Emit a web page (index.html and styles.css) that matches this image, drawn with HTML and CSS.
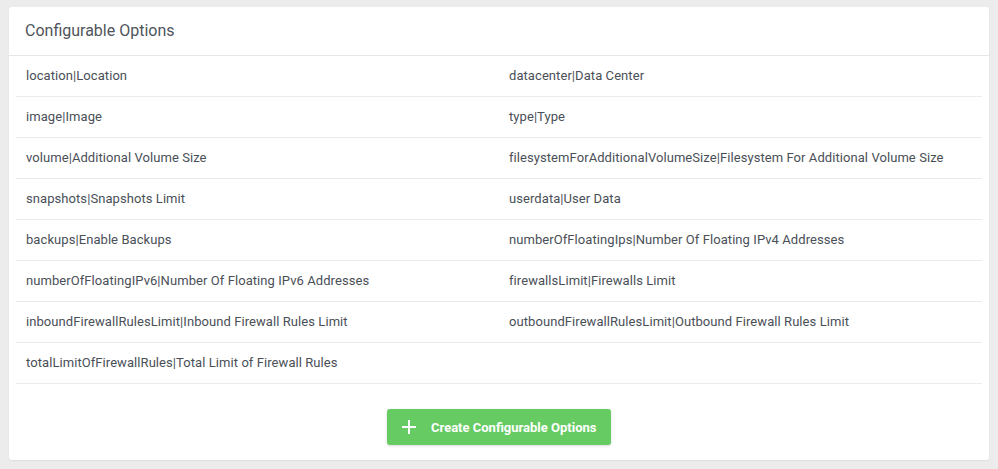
FILE: index.html
```html
<!DOCTYPE html>
<html lang="en">
<head>
    <meta charset="UTF-8">
    <title>Configurable Options</title>
    <link rel="stylesheet" href="styles.css">
</head>
<body>
    <div class="panel">
        <div class="panel-heading">
            <h3>Configurable Options</h3>
        </div>
        <div class="panel-body">
            <table class="options-table">
                <tr><td>location|Location</td><td>datacenter|Data Center</td></tr>
                <tr><td>image|Image</td><td>type|Type</td></tr>
                <tr><td>volume|Additional Volume Size</td><td>filesystemForAdditionalVolumeSize|Filesystem For Additional Volume Size</td></tr>
                <tr><td>snapshots|Snapshots Limit</td><td>userdata|User Data</td></tr>
                <tr><td>backups|Enable Backups</td><td>numberOfFloatingIps|Number Of Floating IPv4 Addresses</td></tr>
                <tr><td>numberOfFloatingIPv6|Number Of Floating IPv6 Addresses</td><td>firewallsLimit|Firewalls Limit</td></tr>
                <tr><td>inboundFirewallRulesLimit|Inbound Firewall Rules Limit</td><td>outboundFirewallRulesLimit|Outbound Firewall Rules Limit</td></tr>
                <tr><td>totalLimitOfFirewallRules|Total Limit of Firewall Rules</td><td></td></tr>
            </table>
            <div class="actions">
                <button class="btn-create">
                    <svg width="14" height="14" viewBox="0 0 14 14"><path d="M7 0v14M0 7h14" stroke="#fff" stroke-width="2"/></svg>
                    <span>Create Configurable Options</span>
                </button>
            </div>
        </div>
    </div>
</body>
</html>
```

FILE: styles.css
```css
body {
    margin: 0;
    padding: 7px 9px 9px 9px;
    background-color: #ececec;
    font-family: Roboto, 'Liberation Sans', sans-serif;
    color: #4c5158;
}
.panel {
    width: 980px;
    background-color: #fff;
    border-radius: 3px;
    box-shadow: 0 1px 2px rgba(0, 0, 0, 0.06);
}
.panel-heading {
    height: 48px;
    padding: 0 16px;
    border-bottom: 1px solid #e6e6e9;
    display: flex;
    align-items: center;
}
.panel-heading h3 {
    margin: 0 0 2px 0;
    font-size: 16px;
    font-weight: 400;
    color: #4f545b;
}
.panel-body {
    padding: 0 7px 15px 7px;
}
.options-table {
    width: 966px;
    border-collapse: collapse;
    table-layout: fixed;
}
.options-table td {
    height: 38px;
    padding: 0 10px 2px 10px;
    border-bottom: 1px solid #ebebef;
    font-size: 13px;
    letter-spacing: 0.07px;
    color: #4a4f57;
    vertical-align: middle;
}
.actions {
    display: flex;
    justify-content: center;
    padding-top: 25px;
}
.btn-create {
    width: 224px;
    height: 36px;
    border: none;
    border-radius: 3px;
    background-color: #66cb63;
    color: #fff;
    font-family: Roboto, 'Liberation Sans', sans-serif;
    font-size: 13px;
    font-weight: 700;
    display: flex;
    align-items: center;
    padding: 0 0 0 15px;
    gap: 15px;
    box-shadow: 0 1px 3px rgba(0, 0, 0, 0.15);
}
```
